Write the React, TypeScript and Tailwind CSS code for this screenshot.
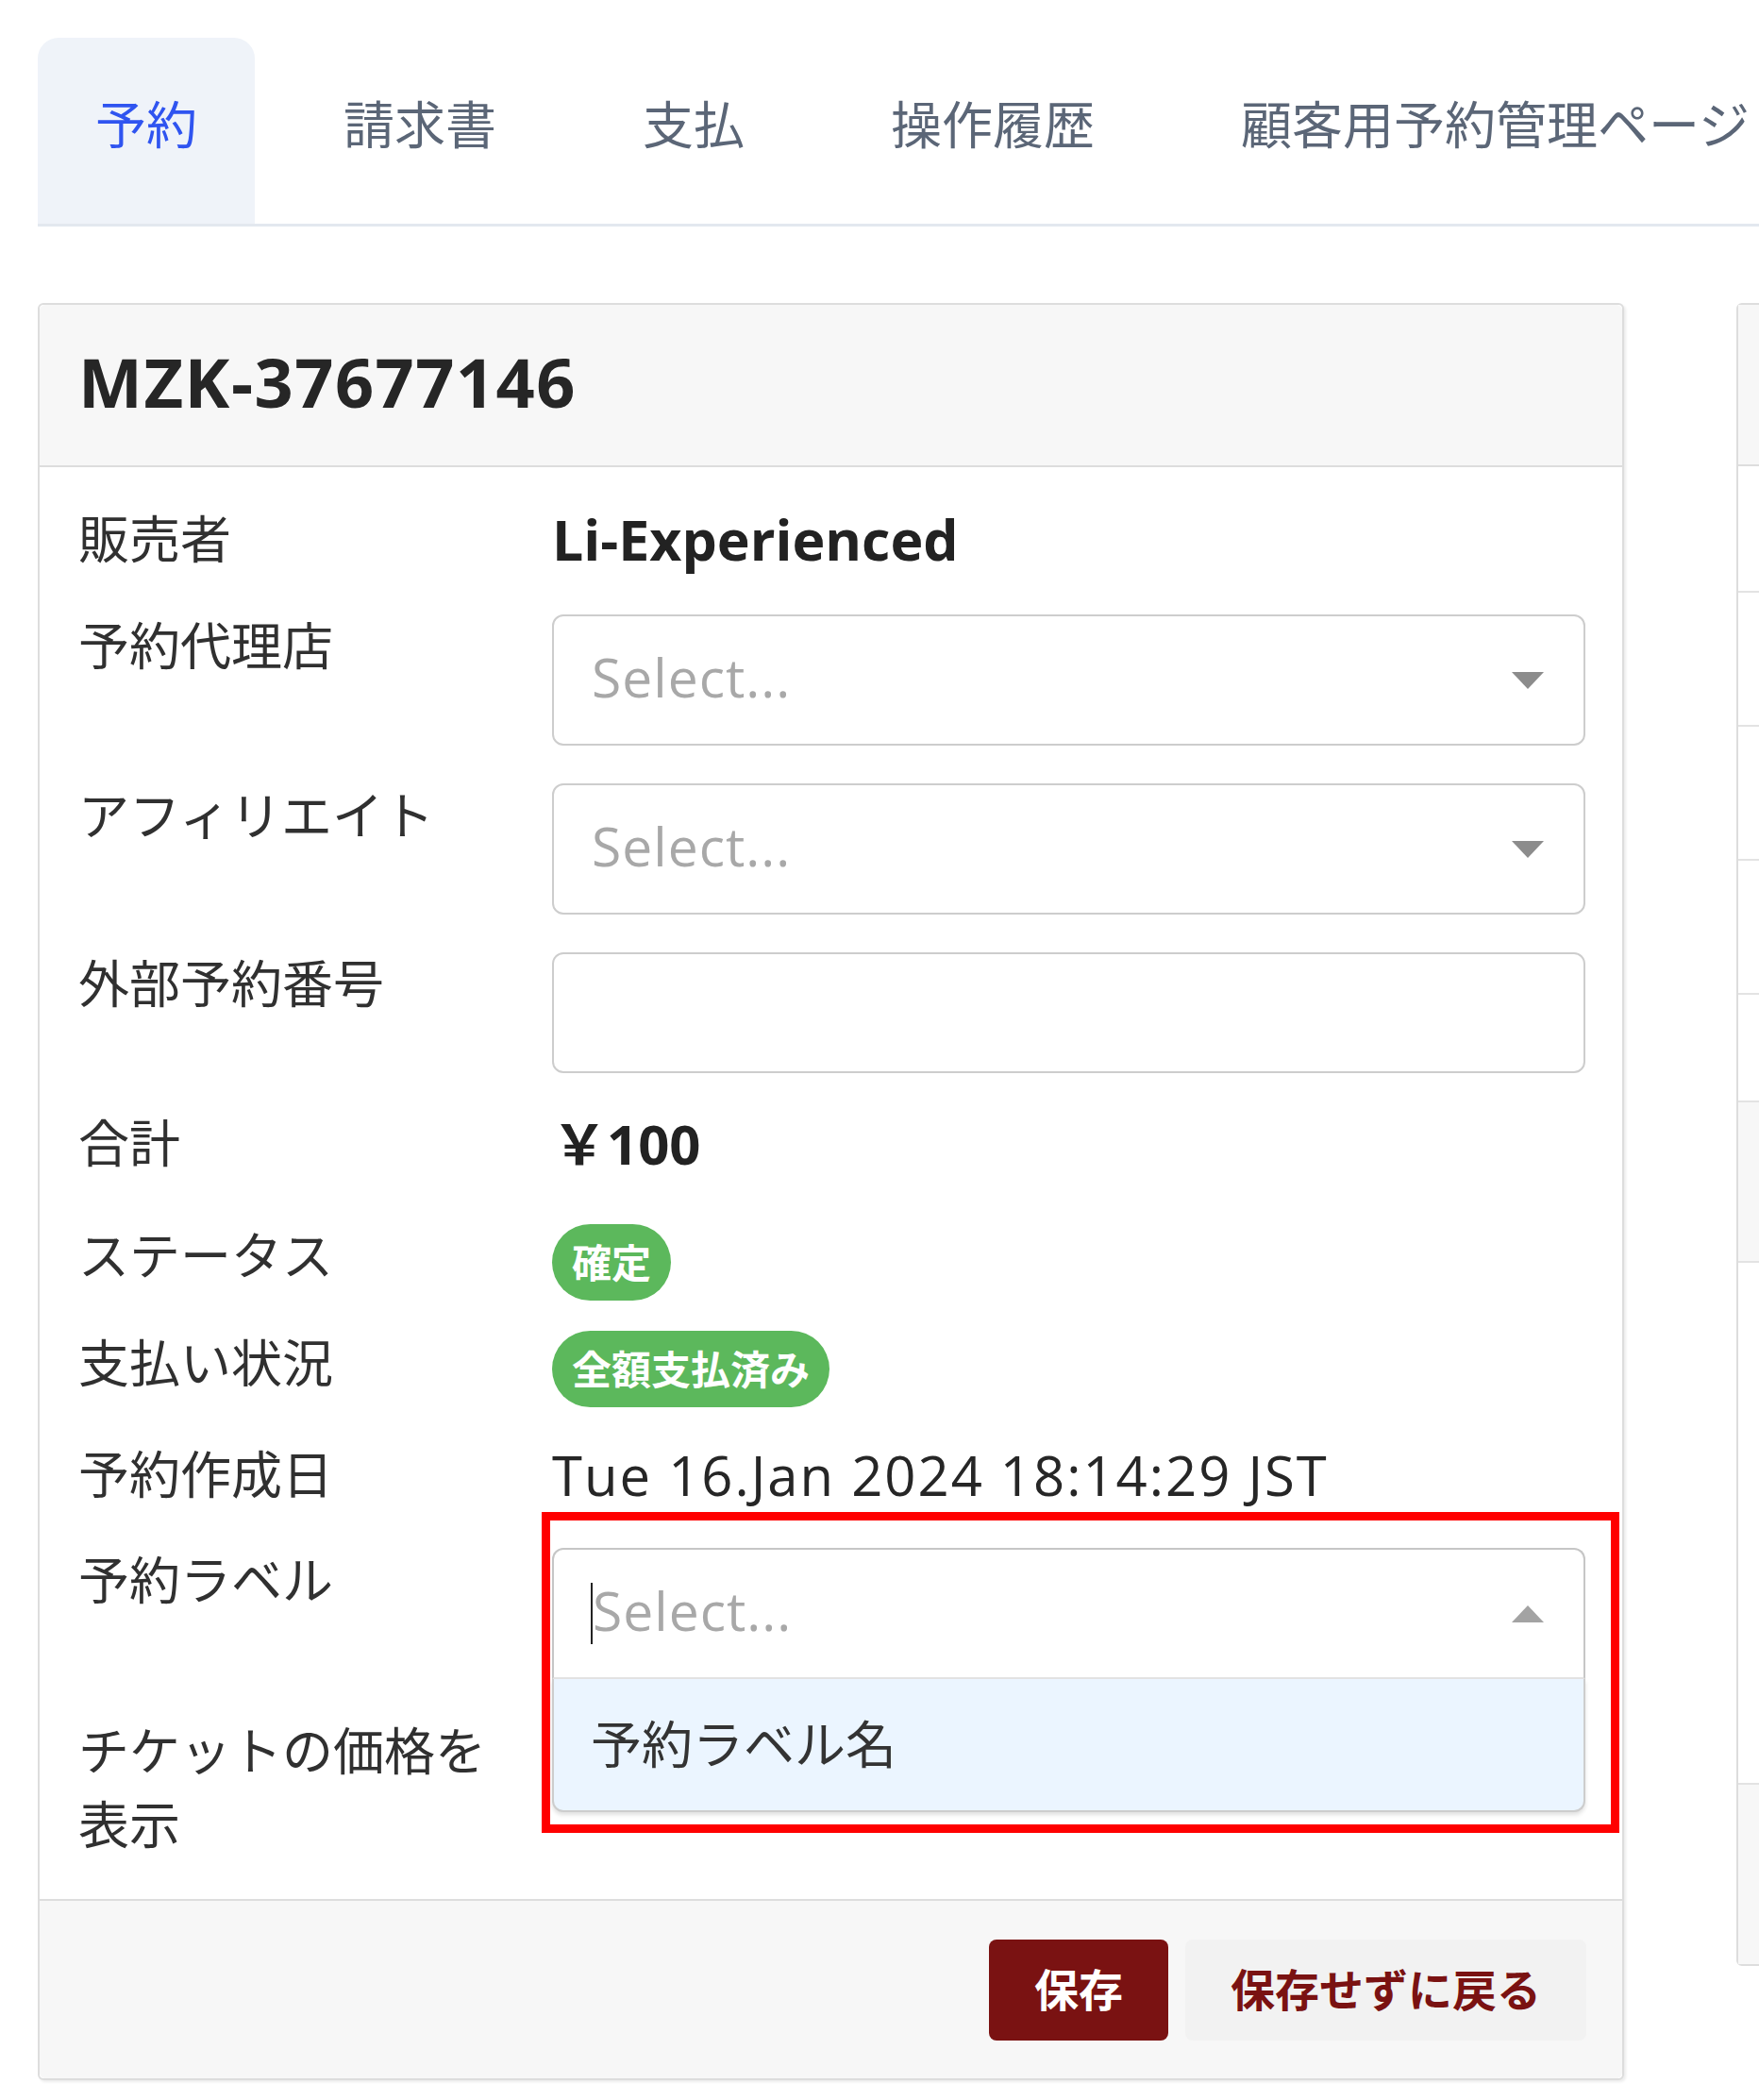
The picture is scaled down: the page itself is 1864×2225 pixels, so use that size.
import React from 'react';

const tabs = ['予約', '請求書', '支払', '操作履歴', '顧客用予約管理ページ'];

function Arrow({ up = false }: { up?: boolean }) {
  return (
    <svg width="34" height="18" viewBox="0 0 34 18" className="shrink-0">
      {up ? <polygon points="17,0 34,18 0,18" fill="#a3a3a3" /> : <polygon points="0,0 34,0 17,18" fill="#8c8c8c" />}
    </svg>
  );
}

function SelectBox() {
  return (
    <div className="h-[139px] w-full flex items-center justify-between border-2 border-[#cdcdcd] rounded-[12px] bg-white pl-[40px] pr-[42px]">
      <span className="text-[57px] tracking-[1px] text-[#a8a8a8] pb-[6px]">Select...</span>
      <Arrow />
    </div>
  );
}

function Row({ label, mt, children }: { label: string; mt: string; children?: React.ReactNode }) {
  return (
    <div className={`flex ${mt}`}>
      <div className="w-[460px] mr-[42px] shrink-0 text-[54px] leading-[78px] text-[#303030]">{label}</div>
      <div className="flex-1">{children}</div>
    </div>
  );
}

function Badge({ text, mt }: { text: string; mt: string }) {
  return (
    <span className={`inline-flex items-center h-[81px] px-[21px] rounded-full bg-[#5cb85c] text-white font-bold text-[42px] ${mt}`}>
      {text}
    </span>
  );
}

export default function App() {
  return (
    <div className="w-[1864px] h-[2225px] overflow-hidden bg-white font-[family-name:'Open_Sans','Noto_Sans_CJK_JP',sans-serif]">
      {/* タブ */}
      <div className="ml-[40px] mt-[40px] flex gap-[33px] border-b-[3px] border-[#e3e8ef]">
        {tabs.map((t, i) => (
          <div
            key={t}
            className={`h-[197px] px-[61px] shrink-0 whitespace-nowrap flex items-center pb-[12px] text-[54px] rounded-t-[22px] ${
              i === 0 ? 'bg-[#eff3f9] text-[#2f54f0]' : 'text-[#5b6677]'
            }`}
          >
            {t}
          </div>
        ))}
      </div>

      <div className="mt-[81px] ml-[40px] flex gap-[119px]">
        {/* 予約カード */}
        <div className="w-[1681px] shrink-0 border-2 border-[#dddddd] rounded-[6px] shadow-[2px_2px_3px_rgba(0,0,0,0.08)] bg-white">
          <div className="h-[172px] bg-[#f7f7f7] border-b-2 border-[#dddddd] flex items-center pl-[41px] rounded-t-[6px]">
            <h1 className="text-[72px] font-bold tracking-[1.5px] text-[#262626] pb-[8px]">MZK-37677146</h1>
          </div>

          <div className="pl-[41px] pr-[39px] pt-[37px] pb-[40px] flex flex-col">
            <Row label="販売者" mt="mt-0">
              <div className="h-[78px] flex items-center text-[59px] font-bold text-[#222]">Li-Experienced</div>
            </Row>
            <Row label="予約代理店" mt="mt-[35px]">
              <div className="mt-[6px]">
                <SelectBox />
              </div>
            </Row>
            <Row label="アフィリエイト" mt="mt-[35px]">
              <div className="mt-[5px]">
                <SelectBox />
              </div>
            </Row>
            <Row label="外部予約番号" mt="mt-[34px]">
              <div className="mt-[6px] h-[128px] border-2 border-[#cdcdcd] rounded-[12px]" />
            </Row>
            <Row label="合計" mt="mt-[35px]">
              <div className="h-[78px] flex items-center text-[58px] font-bold text-[#222]">￥100</div>
            </Row>
            <Row label="ステータス" mt="mt-[41px]">
              <Badge text="確定" mt="mt-[6px]" />
            </Row>
            <Row label="支払い状況" mt="mt-[27px]">
              <Badge text="全額支払済み" mt="mt-[5px]" />
            </Row>
            <Row label="予約作成日" mt="mt-[32px]">
              <div className="h-[78px] flex items-center text-[58px] tracking-[2px] text-[#262626]">
                Tue 16.Jan 2024 18:14:29 JST
              </div>
            </Row>
            <Row label="予約ラベル" mt="mt-[34px]">
              <div className="mt-[5px] relative">
                <div className="h-[139px] flex items-center justify-between border-2 border-b-[#e3e3e3] border-[#c6c6c6] rounded-t-[12px] bg-white pl-[39px] pr-[42px]">
                  <div className="flex items-center">
                    <span className="w-[2px] h-[65px] bg-[#222]" />
                    <span className="text-[57px] tracking-[1px] text-[#a8a8a8] pb-[6px]">Select...</span>
                  </div>
                  <Arrow up />
                </div>
                <div className="absolute left-0 right-0 top-full h-[141px] z-10 bg-[#ebf5ff] border-x-2 border-b-2 border-[#cdcdcd] rounded-b-[12px] shadow-[0_3px_4px_rgba(0,0,0,0.12)] flex items-center pl-[39px] text-[54px] text-[#333]">
                  予約ラベル名
                </div>
                <div className="absolute -left-[11px] -top-[38px] w-[1142px] h-[340px] border-[9px] border-[#ff0000] z-20 pointer-events-none" />
              </div>
            </Row>
            <Row label="チケットの価格を表示" mt="mt-[37px]" />
          </div>

          <div className="h-[190px] border-t-2 border-[#dddddd] bg-[#f7f7f7] rounded-b-[6px] flex items-center justify-end gap-[18px] pr-[38px]">
            <button className="h-[107px] px-[48px] rounded-[8px] bg-[#7a1212] text-white font-bold text-[47px]">保存</button>
            <button className="h-[107px] px-[48px] rounded-[8px] bg-[#f2f2f2] text-[#7a1212] font-bold text-[47px]">保存せずに戻る</button>
          </div>
        </div>

        {/* 右側のカード（一部） */}
        <div className="w-[600px] shrink-0 h-[1762px] border-2 border-[#dddddd] rounded-[6px] bg-white flex flex-col">
          <div className="h-[171px] bg-[#f7f7f7] border-b-2 border-[#dddddd]" />
          <div className="h-[134px] border-b-2 border-[#e3e3e3]" />
          <div className="h-[142px] border-b-2 border-[#e3e3e3]" />
          <div className="h-[142px] border-b-2 border-[#e3e3e3]" />
          <div className="h-[142px] border-b-2 border-[#e3e3e3]" />
          <div className="h-[114px] border-b-2 border-[#e3e3e3]" />
          <div className="h-[170px] bg-[#f7f7f7] border-b-2 border-[#e3e3e3]" />
          <div className="h-[553px] border-b-2 border-[#e3e3e3]" />
          <div className="flex-1 bg-[#f7f7f7]" />
        </div>
      </div>
    </div>
  );
}
